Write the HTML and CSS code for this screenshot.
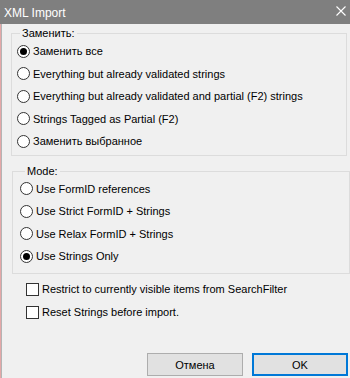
FILE: index.html
```html
<!DOCTYPE html>
<html lang="ru">

<head>
    <meta charset="UTF-8">
    <meta name="viewport" content="width=device-width, initial-scale=1.0">
    <title>XML Import</title>
    <link rel="stylesheet" href="styles.css">
</head>

<body>
    <div class="window">
        <div class="titlebar">
            <span class="title">XML Import</span>
            <svg class="close" width="10" height="10" viewBox="0 0 10 10">
                <path d="M0.5 0.5 L9.5 9.5 M9.5 0.5 L0.5 9.5" stroke="#fff" stroke-width="1.1" fill="none"/>
            </svg>
        </div>

        <div class="content">
            <!-- Replace group -->
            <fieldset class="group group-replace">
                <legend>Заменить:</legend>
                <label class="row"><span class="radio checked"></span>Заменить все</label>
                <label class="row"><span class="radio"></span>Everything but already validated strings</label>
                <label class="row"><span class="radio"></span>Everything but already validated and partial (F2) strings</label>
                <label class="row"><span class="radio"></span>Strings Tagged as Partial (F2)</label>
                <label class="row"><span class="radio"></span>Заменить выбранное</label>
            </fieldset>

            <!-- Mode group -->
            <fieldset class="group group-mode">
                <legend>Mode:</legend>
                <label class="row"><span class="radio"></span>Use FormID references</label>
                <label class="row"><span class="radio"></span>Use Strict FormID + Strings</label>
                <label class="row"><span class="radio"></span>Use Relax FormID + Strings</label>
                <label class="row"><span class="radio checked"></span>Use Strings Only</label>
            </fieldset>

            <div class="checks">
                <label class="row"><span class="checkbox"></span>Restrict to currently visible items from SearchFilter</label>
                <label class="row"><span class="checkbox"></span>Reset Strings before import.</label>
            </div>

            <div class="buttons">
                <button class="btn">Отмена</button>
                <button class="btn btn-default">OK</button>
            </div>
        </div>
    </div>
</body>

</html>
```

FILE: styles.css
```css
body {
    margin: 0;
    font-family: "Liberation Sans", Arial, sans-serif;
    font-size: 11px;
    color: #000;
    background: #f0f0f0;
}

.window {
    width: 350px;
    height: 378px;
    display: flex;
    flex-direction: column;
    background: #f0f0f0;
    overflow: hidden;
}

.titlebar {
    height: 24px;
    flex-shrink: 0;
    background: #7f7f7f;
    color: #fff;
    display: flex;
    align-items: center;
    justify-content: space-between;
    padding: 0 4px 0 4px;
    font-size: 12px;
}

.title {
    padding-top: 1px;
}

.close {
    margin-right: 0;
    margin-top: -2px;
}

.content {
    flex: 1;
    display: flex;
    flex-direction: column;
    padding: 3px 0 2px 10px;
    border-left: 1px solid #e4a7a7;
    box-shadow: inset 1px 0 #b4b4b4;
}

.group {
    margin: 0;
    padding: 0;
    border: 1px solid #dcdcdc;
    min-width: 0;
}

.group legend {
    line-height: 13px;
    padding: 0 2px;
    margin-left: 3px;
}

.group-replace {
    width: 336px;
    box-sizing: border-box;
    padding: 0 0 2px 5px;
}

.group-mode {
    width: 338px;
    box-sizing: border-box;
    margin: 9px 0 0 1px;
    padding: 0 0 5px 7px;
}

.group-mode legend {
    margin-left: 5px;
}

.row {
    display: flex;
    align-items: center;
    height: 22.5px;
    white-space: nowrap;
}

.radio {
    width: 13px;
    height: 13px;
    box-sizing: border-box;
    border: 1px solid #333;
    border-radius: 50%;
    background: #fff;
    margin-right: 3px;
    display: flex;
    align-items: center;
    justify-content: center;
    flex-shrink: 0;
}

.radio.checked::after {
    content: "";
    width: 7px;
    height: 7px;
    border-radius: 50%;
    background: #000;
}

.checks {
    margin: 4px 0 0 15px;
}

.checks .row {
    height: 23px;
}

.checkbox {
    width: 13px;
    height: 13px;
    box-sizing: border-box;
    border: 1px solid #333;
    background: #fff;
    margin-right: 3px;
    flex-shrink: 0;
}

.buttons {
    margin-top: auto;
    display: flex;
    justify-content: flex-end;
    gap: 9px;
    padding-right: 2px;
}

.btn {
    width: 96px;
    height: 23px;
    box-sizing: border-box;
    border: 1px solid #adadad;
    background: #e1e1e1;
    font-family: "Liberation Sans", Arial, sans-serif;
    font-size: 11px;
    color: #000;
    padding: 0;
}

.btn-default {
    border: 2px solid #0078d7;
}
```
